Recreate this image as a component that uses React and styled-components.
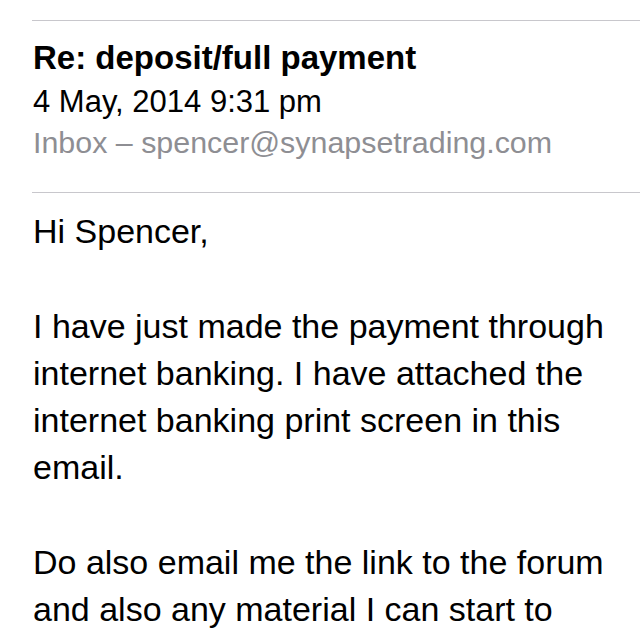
import React from "react";
import styled, { createGlobalStyle } from "styled-components";

const GlobalStyle = createGlobalStyle`
  html, body {
    margin: 0;
    padding: 0;
    background: #ffffff;
  }
  body {
    font-family: "Liberation Sans", Arial, Helvetica, sans-serif;
    color: #000000;
  }
`;

const Page = styled.div`
  width: 640px;
  height: 630px;
  overflow: hidden;
  background: #ffffff;
`;

const Header = styled.div`
  margin: 20px 0 0 32px;
  padding: 14px 0 29px 1px;
  border-top: 1px solid #c8c7cc;
  border-bottom: 1px solid #c8c7cc;
`;

const Subject = styled.div`
  font-size: 33px;
  font-weight: bold;
  line-height: 46px;
  white-space: nowrap;
`;

const Meta = styled.div`
  font-size: ${(p) => (p.muted ? "30.4px" : "31px")};
  line-height: 41px;
  white-space: nowrap;
  color: ${(p) => (p.muted ? "#8e8e93" : "#000000")};
`;

const Body = styled.div`
  padding: 15px 20px 0 33px;
  font-size: 34px;
  line-height: 47px;
`;

const Para = styled.p`
  margin: ${(p) => (p.first ? "0" : "48px")} 0 0;
  white-space: nowrap;
`;

const paragraphs = [
  ["Hi Spencer,"],
  [
    "I have just made the payment through",
    "internet banking. I have attached the",
    "internet banking print screen in this",
    "email.",
  ],
  ["Do also email me the link to the forum", "and also any material I can start to"],
];

export default function App() {
  return (
    <Page>
      <GlobalStyle />
      <Header>
        <Subject>Re: deposit/full payment</Subject>
        <Meta>4 May, 2014 9:31 pm</Meta>
        <Meta muted>Inbox – spencer@synapsetrading.com</Meta>
      </Header>
      <Body>
        {paragraphs.map((lines, i) => (
          <Para key={i} first={i === 0}>
            {lines.map((line, j) => (
              <React.Fragment key={j}>
                {line}
                {j < lines.length - 1 && <br />}
              </React.Fragment>
            ))}
          </Para>
        ))}
      </Body>
    </Page>
  );
}
